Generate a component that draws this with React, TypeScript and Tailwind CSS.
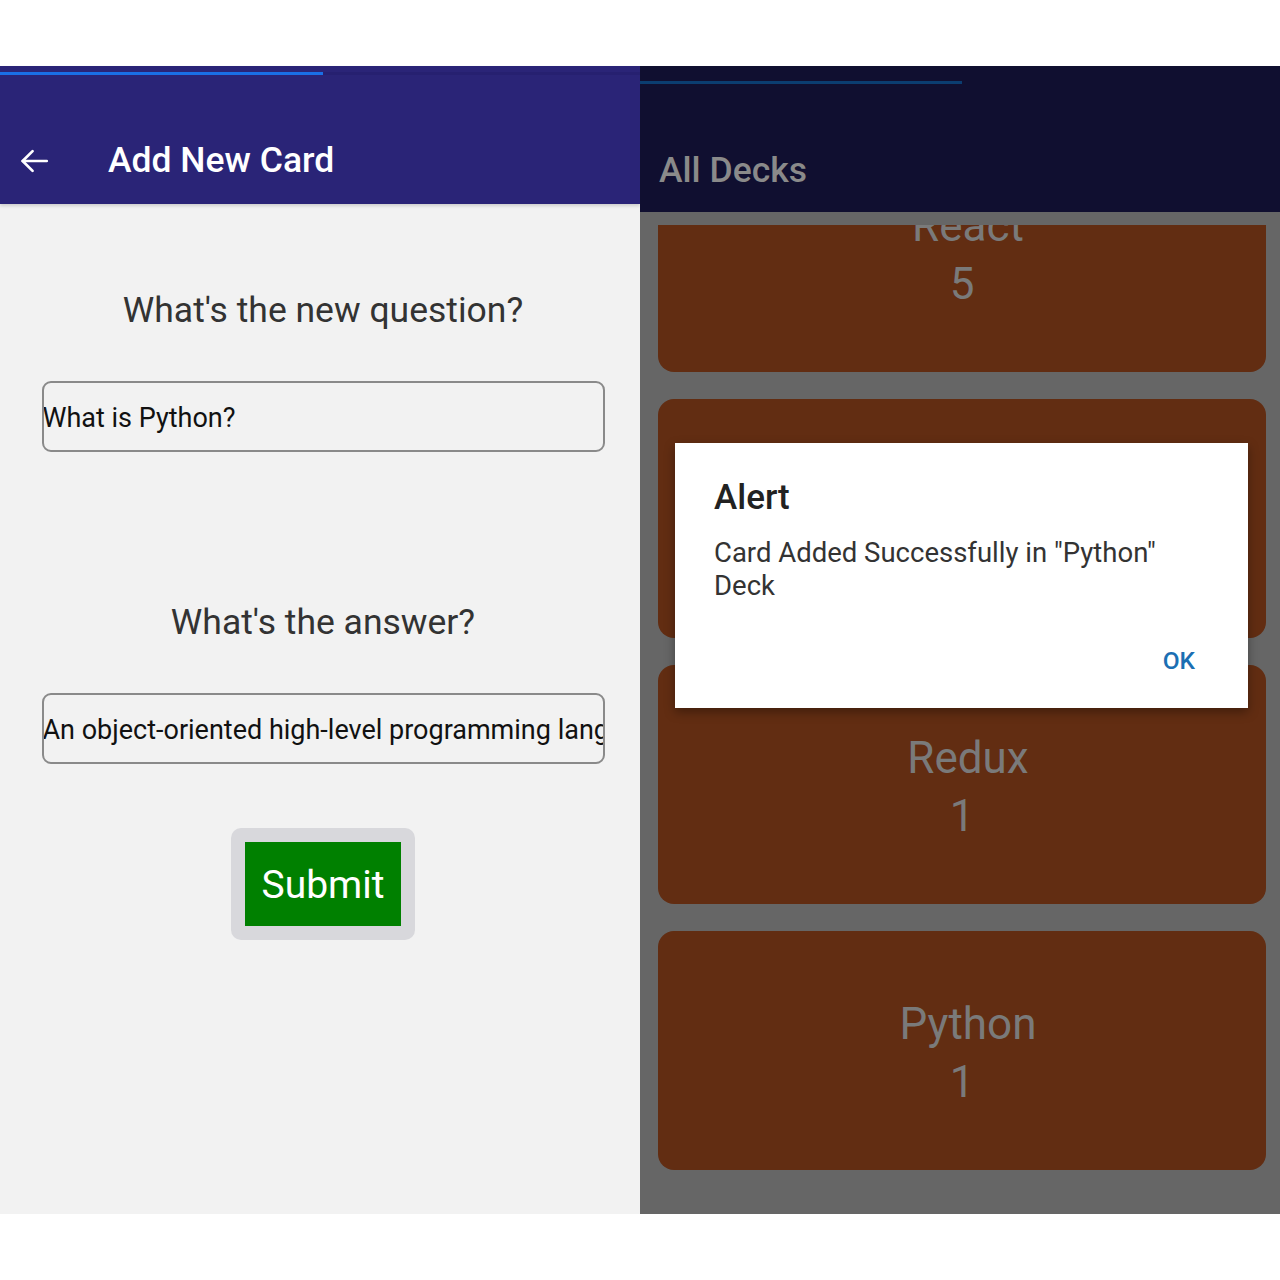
import React from "react";

const font = { fontFamily: "Roboto, 'Noto Sans', Arial, sans-serif" };

function Deck({ name, count }: { name: string; count: string }) {
  return (
    <div className="h-[239px] shrink-0 rounded-[16px] bg-[#622d12] flex flex-col items-center pt-[64px] text-[#7a7a7a] text-[44px] leading-[58px]">
      <div className="pl-[12px]">{name}</div>
      <div>{count}</div>
    </div>
  );
}

export default function App() {
  return (
    <div className="w-[1280px] h-[1280px] bg-white flex flex-col" style={font}>
      <div className="h-[66px] shrink-0" />
      <div className="flex h-[1148px]">
        {/* Left panel */}
        <div className="w-[640px] flex flex-col bg-[#f2f2f2]">
          <div className="h-[138px] bg-[#2a2477] flex flex-col shadow-[0_2px_3px_rgba(0,0,0,0.15)]">
            <div className="mt-[6px] h-[3px] flex">
              <div className="w-[323px] bg-[#1a6fe6]" />
              <div className="flex-1 bg-[#262070]" />
            </div>
            <div className="flex items-center mt-[63px] h-[46px]">
              <svg className="ml-[17px]" width="34" height="34" viewBox="0 0 24 24" fill="none" stroke="white" strokeWidth="1.9" strokeLinecap="round" strokeLinejoin="round">
                <path d="M21 12H4" />
                <path d="M11 5l-7 7 7 7" />
              </svg>
              <div className="ml-[57px] text-white text-[35.5px] font-medium">Add New Card</div>
            </div>
          </div>
          <div className="flex flex-col items-center pl-[6px]">
            <div className="mt-[85px] text-[35.5px] leading-[42px] text-[#333]">What's the new question?</div>
            <div className="mt-[50px] w-[563px] h-[71px] border-2 border-[#8a8a8a] rounded-[9px] flex items-center overflow-hidden text-[27px] text-[#111] whitespace-nowrap">
              <span className="-ml-[1px] pt-[3px]">What is Python?</span>
            </div>
            <div className="mt-[149px] text-[35.5px] leading-[42px] text-[#333]">What's the answer?</div>
            <div className="mt-[50px] w-[563px] h-[71px] border-2 border-[#8a8a8a] rounded-[9px] flex items-center overflow-hidden text-[27px] text-[#111] whitespace-nowrap">
              <span className="-ml-[1px] pt-[3px]">An object-oriented high-level programming language</span>
            </div>
            <div className="mt-[64px] w-[184px] h-[112px] rounded-[10px] bg-[#d8d8dc] flex items-center justify-center">
              <div className="w-[156px] h-[84px] bg-[#008000] flex items-center justify-center text-white text-[39px] pt-[3px]">Submit</div>
            </div>
          </div>
        </div>
        {/* Right panel */}
        <div className="w-[640px] flex flex-col bg-[#666666] relative">
          <div className="h-[146px] shrink-0 bg-[#100f30] flex flex-col relative z-10">
            <div className="mt-[15px] h-[3px] flex">
              <div className="w-[322px] bg-[#0b3d70]" />
            </div>
            <div className="mt-[66px] ml-[19px] text-[35.5px] font-medium text-[#8a8a8a] leading-[40px]">All Decks</div>
          </div>
          <div className="flex-1 pt-[13px] flex flex-col min-h-0">
            <div className="flex-1 overflow-hidden">
              <div className="flex flex-col gap-[27px] pl-[18px] pr-[14px] -mt-[92px]">
                <Deck name="React" count="5" />
                <Deck name="" count="" />
                <Deck name="Redux" count="1" />
                <Deck name="Python" count="1" />
              </div>
            </div>
          </div>
          <div className="absolute left-[35px] top-[377px] w-[573px] h-[265px] bg-white shadow-[0_4px_10px_rgba(0,0,0,0.35)] z-20 flex flex-col pl-[39px] pr-[30px]">
            <div className="mt-[34px] text-[35px] font-medium text-[#222] leading-[42px]">Alert</div>
            <div className="mt-[17px] text-[27.5px] text-[#333] leading-[33px]">Card Added Successfully in "Python" Deck</div>
            <div className="mt-auto mb-[28px] self-end mr-[23px] text-[24.5px] font-medium text-[#1b6fb3]">OK</div>
          </div>
        </div>
      </div>
    </div>
  );
}
